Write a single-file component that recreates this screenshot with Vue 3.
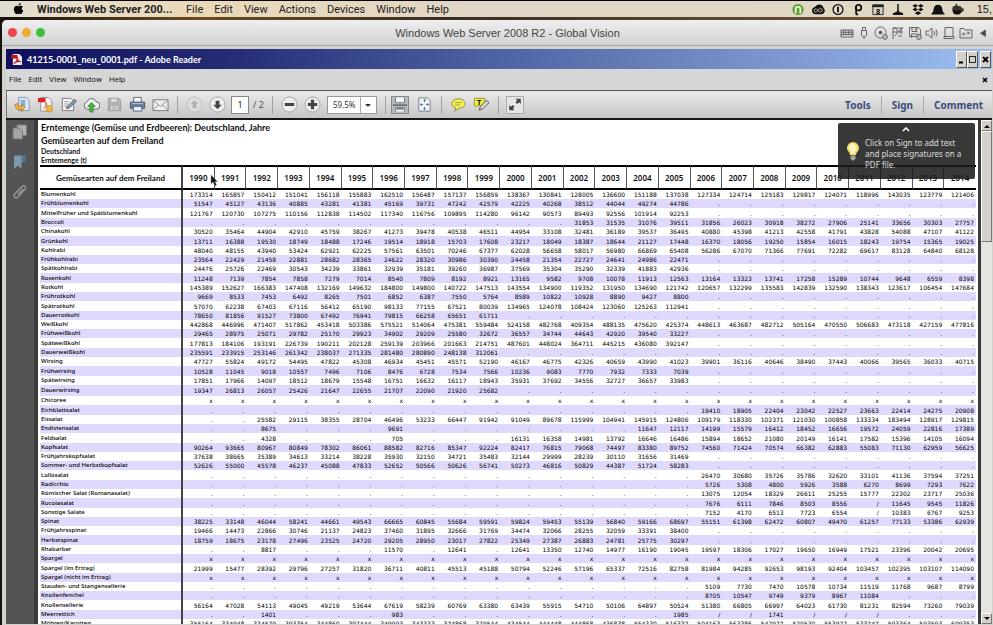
<script setup>
import { ref } from 'vue'

const macMenus = ['File', 'Edit', 'View', 'Actions', 'Devices', 'Window', 'Help']
const readerMenus = ['File', 'Edit', 'View', 'Window', 'Help']
const page = ref('1')
const zoom = ref('59.5%')
const years = Array.from({ length: 25 }, (_, i) => 1990 + i)

// "token*n" repeats a token n times
const expand = (line) =>
  line.split(' ').flatMap((t) => {
    const [value, count] = t.split('*')
    return Array(Number(count || 1)).fill(value)
  })

const rows = [
  ['Blumenkohl', '173314 165857 150412 151041 156118 155883 162510 156487 157137 156859 138367 130841 128005 136600 151188 137038 127334 124714 125183 129817 124071 118996 143035 123779 121406'],
  ['Frühblumenkohl', '51547 45127 43136 40885 43281 41381 45169 39731 47242 42579 42225 40268 38512 44044 49274 44786 .*9'],
  ['Mittelfrüher und Spätblumenkohl', '121767 120730 107275 110156 112838 114502 117340 116756 109895 114280 96142 90573 89493 92556 101914 92253 .*9'],
  ['Broccoli', '.*12 31853 31535 31076 39511 31856 26023 30918 38272 27906 25141 33656 30303 27757'],
  ['Chinakohl', '30520 35464 44904 42910 45759 38267 41273 39478 40538 46511 44954 33108 32481 36189 39537 36495 40880 45398 41213 42558 41791 43828 54088 47107 41122'],
  ['Grünkohl', '13711 16388 19530 18749 18488 17246 19514 18918 15703 17608 23217 18049 18387 18644 21127 17448 16370 18056 19250 15854 16015 18243 19754 15365 19025'],
  ['Kohlrabi', '48040 48155 43940 53424 62921 62225 57561 63501 70246 67377 62028 56658 58017 56980 66869 65408 56286 67070 71366 77691 72282 69617 83128 64840 68128'],
  ['Frühkohlrabi', '23564 22429 21458 22881 28682 28365 24622 28320 30986 30390 24458 21354 22727 24641 24986 22471 .*9'],
  ['Spätkohlrabi', '24476 25726 22469 30543 34239 33861 32939 35181 39260 36987 37569 35304 35290 32339 41883 42936 .*9'],
  ['Rosenkohl', '11248 7139 7854 7858 7279 7014 8540 7809 8192 8921 13165 9582 9708 10078 11913 12563 13164 13323 13741 17258 15289 10744 9648 6559 8398'],
  ['Rotkohl', '145389 152627 166383 147408 132169 149632 184800 149800 140722 147513 143554 134900 119352 131950 134690 121742 120657 132299 135583 142839 132590 138343 123617 106454 147684'],
  ['Frührotkohl', '9669 8533 7453 6492 8265 7501 6852 6387 7550 5764 8589 10822 10928 8890 9427 8800 .*9'],
  ['Spätrotkohl', '57070 62238 67403 67116 56412 65190 98133 77155 67521 80039 134965 124078 108424 123060 125263 112941 .*9'],
  ['Dauerrotkohl', '78650 81856 91527 73800 67492 76941 79815 66258 65651 61711 .*15'],
  ['Weißkohl', '442868 446996 471407 517862 453418 503386 575521 514064 475381 559484 524158 482768 409354 488135 475620 425374 448613 463687 482712 505164 470550 506683 473118 427159 477816'],
  ['Frühweißkohl', '29465 28975 25071 29782 25170 29923 34902 29209 25580 32672 36557 34744 44643 42920 39540 33227 .*9'],
  ['Spätweißkohl', '177813 184106 193191 226739 190211 202128 259139 203966 201663 214751 487601 448024 364711 445215 436080 392147 .*9'],
  ['Dauerweißkohl', '235591 233915 253146 261342 238037 271335 281480 280890 248138 312061 .*15'],
  ['Wirsing', '47727 55824 49172 54495 47822 45308 46934 45451 45571 52190 46167 46775 42326 40659 43990 41023 39901 36116 40646 38490 37443 40066 39565 36033 40715'],
  ['Frühwirsing', '10528 11045 9018 10557 7496 7106 8476 6728 7534 7566 10236 9083 7770 7932 7333 7039 .*9'],
  ['Spätwirsing', '17851 17966 14097 18512 18679 15548 16751 16632 16117 18943 35931 37692 34556 32727 36657 33983 .*9'],
  ['Dauerwirsing', '19347 26813 26057 25426 21647 22655 21707 22090 21920 25682 .*15', true],
  ['Chicoree', 'x*25'],
  ['Eichblattsalat', '.*16 19410 18905 22404 23042 22527 23663 22414 24275 20908'],
  ['Eissalat', '.*2 25582 29115 38355 28704 46496 53233 66447 91942 91049 89678 115999 104941 145915 124806 109179 118330 102371 121030 100858 133334 183494 128917 129815'],
  ['Endiviensalat', '.*2 8675 .*3 9691 .*7 11647 12117 14199 15579 16412 18452 16656 19572 24059 22816 17389'],
  ['Feldsalat', '.*2 4328 .*3 705 .*3 16131 16358 14981 13792 16646 16486 15894 18652 21080 20149 16141 17582 15396 14105 16094'],
  ['Kopfsalat', '90264 93665 80967 80849 78302 86061 88582 82716 85347 92224 82417 76815 79068 74497 83380 89752 74560 71424 70574 66382 62883 55083 71130 62959 56625'],
  ['Frühjahrskopfsalat', '37638 38665 35389 34613 33214 38228 35930 32150 34721 35483 32144 29999 28239 30110 31656 31469 .*9'],
  ['Sommer- und Herbstkopfsalat', '52626 55000 45578 46237 45088 47833 52652 50566 50626 56741 50273 46816 50829 44387 51724 58283 .*9'],
  ['Lollosalat', '.*16 26470 30680 35726 35786 32620 33101 41136 37594 37251'],
  ['Radicchio', '.*16 5726 5308 4800 5926 3588 6270 8699 7293 7622'],
  ['Römischer Salat (Romanasalat)', '.*16 13075 12054 18329 26611 25255 15777 22302 23717 25036'],
  ['Rucolasalat', '.*16 7676 6111 7846 8503 8556 / 11645 9545 11826'],
  ['Sonstige Salate', '.*16 7152 4170 6513 7723 6554 / 10383 6767 9253'],
  ['Spinat', '38225 33148 46044 58241 44661 49543 66665 60845 55684 59591 59824 59453 55139 56840 59166 68697 55151 61398 62472 60807 49470 61257 77133 53386 62939'],
  ['Frühjahrsspinat', '19466 14473 22866 30746 21137 24823 37460 31895 32666 31769 34474 32066 28255 32059 33391 38400 .*9'],
  ['Herbstspinat', '18759 18675 23178 27496 23525 24720 29205 28950 23017 27822 25349 27387 26883 24781 25775 30297 .*9'],
  ['Rhabarber', '.*2 8817 .*3 11570 . 12641 . 12641 13350 12740 14977 16190 19045 19597 18306 17027 19650 16949 17521 23396 20042 20695'],
  ['Spargel', 'x*25'],
  ['Spargel (im Ertrag)', '21999 15477 28392 29796 27257 31820 36711 40811 45513 45188 50794 52246 57196 65337 72516 82758 81984 94285 92653 98193 92404 103457 102395 103107 114090'],
  ['Spargel (nicht im Ertrag)', 'x*25'],
  ['Stauden- und Stangensellerie', '.*16 5109 7730 7470 10578 10734 11519 11768 9687 8799'],
  ['Knollenfenchel', '.*16 8705 10547 9749 9379 8967 11084 .*3'],
  ['Knollensellerie', '56164 47028 54113 49045 49219 53644 67619 58239 60769 63380 63439 55915 54710 50106 64897 50524 51380 66805 66997 64023 61730 81231 82594 73260 79039'],
  ['Meerrettich', '.*2 1401 .*3 983 .*8 1985 /*2 1741 /*3 .*3'],
  ['Möhren/Karotten', '355164 334948 334579 393354 344860 397444 349993 343333 374868 379544 434544 444448 444868 436838 554330 516337 504163 563386 547977 570530 553977 533747 593364 593593 609353'],
].map(([label, line, groupEnd]) => ({ label, groupEnd, values: expand(line) }))
</script>

<template>
  <div class="desktop">
    <header class="macbar">
      <svg class="apple" viewBox="0 0 12 14" aria-hidden="true"><path d="M8.7 0C8.8 1.6 7.6 3 6 3 5.900 1.500 7.200.200 8.700 0ZM6.100 3.700c.700 0 1.300-.600 2.600-.600 1 0 1.900.500 2.400 1.200-2 1.300-1.600 4 .5 4.800-.500 1.500-1.700 3.800-3 3.800-.900 0-1.200-.500-2.300-.500s-1.400.500-2.300.500C2.400 12.900.6 10 .6 7.300.600 4.600 2.200 3.200 3.800 3.200c1 0 1.700.500 2.300.500Z" /></svg>
      <strong class="appname">Windows Web Server 200...</strong>
      <nav class="macmenu"><a v-for="m in macMenus" :key="m" href="#">{{ m }}</a></nav>
      <div class="status">
        <svg viewBox="0 0 14 14"><circle cx="7" cy="7" r="6" fill="#5fa52c" /><path d="M4.500 11V6.500a2.500 2.500 0 0 1 5 0V11" fill="none" stroke="#fff" stroke-width="1.800" /></svg>
        <svg viewBox="0 0 14 14"><path d="M4 12a3.900 3.900 0 0 1-.3-7.700A5 5 0 0 1 13 5.500a3.700 3.700 0 0 1-2 6.500Z" fill="#111" /><path d="M8.500 9.500 5.500 6.800a1.700 1.700 0 1 0 0 2.600l2.800-3a1.900 1.900 0 1 1 .4 3" fill="none" stroke="#ded6c4" stroke-width=".9" /></svg>
        <svg viewBox="0 0 14 14"><circle cx="7" cy="7" r="5.300" fill="none" stroke="#111" stroke-width="1.400" /><path d="M7 4v6" stroke="#111" stroke-width="2" /></svg>
        <svg viewBox="0 0 14 14"><circle cx="7.500" cy="5" r="3" fill="none" stroke="#111" stroke-width="1.900" /><path d="M5 4v7q0 2 2 1" fill="none" stroke="#111" stroke-width="1.900" /></svg>
        <svg viewBox="0 0 14 14"><path d="M1.500 2.500h11v10h-11z" fill="#ded6c4" stroke="#222" /><path d="M1 1.500h12v3H1z" fill="#222" /><text x="7" y="11.500" text-anchor="middle" font-size="8" font-weight="700" font-family="Liberation Sans, sans-serif">8</text></svg>
        <svg viewBox="0 0 14 14"><path d="M6.200 1h1.600v7l.7 1.500 4 1.500v2h-11v-2l4-1.500.7-1.500Z" fill="#111" /></svg>
        <svg viewBox="0 0 14 14"><path d="m4 1 3 2-3 2-3-2Zm6 0 3 2-3 2-3-2ZM4 5l3 2-3 2-3-2Zm6 0 3 2-3 2-3-2ZM7 8.500 10.500 11 7 13 3.500 11Z" fill="#111" /></svg>
        <svg viewBox="0 0 14 14"><path d="M1.500 10C2.500 9 1.500 2 7 2s4.500 7 5.500 8l1.500 1v1.500H0V11Z" fill="#111" /></svg>
        <svg viewBox="0 0 14 14"><path d="M1 6h10c0 6-2 6.500-5 6.500S1 12 1 6Z" fill="#111" /><ellipse cx="6" cy="5.500" rx="5" ry="2.500" fill="#3a332b" /><path d="M10.500 6.500h2q.5 2.500-3 3M5 4q-1-1.500 1-3" fill="none" stroke="#111" stroke-width="1.300" /></svg>
        <time>15,</time>
      </div>
    </header>

    <div class="vm">
      <div class="vmtitle">
        <div class="lights"><button class="red" aria-label="Close"></button><button class="amber" aria-label="Minimize"></button><button class="green" aria-label="Zoom"></button></div>
        <h1>Windows Web Server 2008 R2 - Global Vision</h1>
        <div class="devices">
          <svg viewBox="0 0 14 14"><path d="M1 4h12v7H1zM1 6.300h12M1 8.600h12M3.500 4v5M6 4v5M8.500 4v5M11 4v5" /></svg>
          <svg viewBox="0 0 14 14"><path d="M5.500 1.500h3v3h-3zM4.500 4.500h5v5l-1 1h-3l-1-1zM7 10.500V13" /></svg>
          <svg viewBox="0 0 14 14"><circle cx="6.500" cy="6.500" r="5.500" /><circle cx="6.500" cy="6.500" r="1.500" fill="#555" /><circle cx="11" cy="11" r="2.400" fill="#bbb" /></svg>
          <svg viewBox="0 0 14 14"><path d="M2 13V2h3l2 4h5M2 6h5l5-4M4 10l3-4M10 8V2M2 2h10M7 10h4" /></svg>
          <svg viewBox="0 0 14 14"><path d="M1.500 1.500h9l2 2v7h-11zM4 1.500v4h5v-4M3.500 12V8H10v3M7.500 2.500v2" /><circle cx="11" cy="11" r="2.400" fill="#bbb" /></svg>
          <svg viewBox="0 0 14 14"><path d="M1 5h2.500L7 2v10L3.500 9H1zM9 5q1.500 2 0 4M11 3.500q2.500 3.500 0 7" /></svg>
          <svg viewBox="0 0 14 14"><path d="M3 1.500h8v9H3zM2 10.500h10v2H2z" /></svg>
          <svg viewBox="0 0 14 14"><path d="M1 2.500h4l1 1.500h7v8H1zM3.500 8h3m-1.500-1.500L3.500 8 5 9.500M10.500 7h-3M9 5.500 10.500 7 9 8.500" /></svg>
          <svg viewBox="0 0 14 14"><path d="M9.500 4v6.500L4.500 7.200z" fill="#444" /></svg>
        </div>
      </div>

      <main class="reader">
        <div class="bluebar">
          <svg class="pdf" viewBox="0 0 12 12"><path d="M2 0h7l3 3v9H2z" fill="#f3e9e9" /><path d="M0 1h7v4H0z" fill="#b3141c" /><path d="M3 10.500C7 8 7 5 6.500 3 7 7 9 8.500 11 8.500 8 7.500 5 8.500 3 10.500Z" fill="none" stroke="#b3141c" stroke-width="1.200" /></svg>
          <h2>41215-0001_neu_0001.pdf - Adobe Reader</h2>
          <div class="winbtns">
            <button aria-label="Minimize"><svg viewBox="0 0 9 13"><path d="M2 9.500h4" stroke="#000" stroke-width="2" /></svg></button>
            <button aria-label="Maximize"><svg viewBox="0 0 9 13"><path d="M1.500 3.500h6v6h-6zM1 3.500h7" fill="none" stroke="#222" /></svg></button>
            <button class="close" aria-label="Close"><svg viewBox="0 0 9 13"><path d="m2 4 5 5M7 4 2 9" stroke="#000" stroke-width="1.800" /></svg></button>
          </div>
        </div>
        <nav class="menurow">
          <a v-for="m in readerMenus" :key="m" href="#">{{ m }}</a>
          <button class="docclose" aria-label="Close document"><svg viewBox="0 0 6 6"><path d="m1 1 4 4M5 1 1 5" stroke="#000" stroke-width="1.600" /></svg></button>
        </nav>

        <div class="toolbar">
          <button class="tool" aria-label="Open"><svg viewBox="0 0 18 18"><path d="M5 1.500h8l3 3v11H5z" fill="#dfe8f5" stroke="#7f95b5" /><path d="M7 4h5v7H7z" fill="#8fb0dc" /><path d="M1 9c0 5 3 6 7 5v2.500l4-4.500-4-3.500V11c-3 .5-4 0-4-3Z" fill="#f0b23c" stroke="#a8701c" stroke-width=".7" /></svg></button>
          <button class="tool" aria-label="Create PDF"><svg viewBox="0 0 18 18"><path d="M4 1.500h8l3.500 3.500v11H4z" fill="#f7f3f1" stroke="#9a8f8c" /><path d="M1 2h8v4.500H1z" fill="#d8232c" /><path d="M7 13c3-2 2.500-4 2.500-6 .5 3 2 4 4 4.500" fill="none" stroke="#c33" /><circle cx="13" cy="13.500" r="3.500" fill="#f5b544" stroke="#c98a20" stroke-width=".7" /></svg></button>
          <button class="tool" aria-label="Sign document"><svg viewBox="0 0 18 18"><path d="M2.500 2.500h9l3 3v10h-12z" fill="#f4f4f4" stroke="#777" /><path d="M4.500 6h5M4.500 8.500h4M4.500 11h3" stroke="#999" /><path d="m7 13.500 1-3 7.500-7 2 2-7.500 7z" fill="#8b98a5" stroke="#4f5a66" stroke-width=".9" /></svg></button>
          <button class="tool" aria-label="Upload"><svg viewBox="0 0 18 18"><path d="M4.500 14a4 4 0 0 1-.3-7.800 5 5 0 0 1 9.500-.2 4 4 0 0 1 .3 8Z" fill="#eee" stroke="#666" /><path d="m9 7 4 4h-2.300v6H7.300v-6H5Z" fill="#4fb848" stroke="#2c8429" stroke-width=".8" /></svg></button>
          <button class="tool" aria-label="Save"><svg viewBox="0 0 18 18"><path d="M2.500 2.500h11l2 2v11h-13z" fill="#b5b5b5" stroke="#9a9a9a" /><path d="M5 2.500h7v4.500H5zM4.500 10h9v5.500h-9z" fill="#dcdcdc" stroke="#a2a2a2" stroke-width=".8" /><path d="M6 12h6M6 14h6" stroke="#aaa" /></svg></button>
          <button class="tool" aria-label="Print"><svg viewBox="0 0 18 18"><path d="M5 1.500h8v6H5z" fill="#fff" stroke="#666" /><path d="M1.500 6.500h15v6.500h-15z" fill="#68809e" stroke="#45566c" /><path d="M3 8h12" stroke="#b4c6dc" /><path d="M4.500 11h9v5h-9z" fill="#e7f0fb" stroke="#55657b" /></svg></button>
          <button class="tool" aria-label="Email"><svg viewBox="0 0 18 18"><path d="M1 4h16v11.500H1z" fill="#eee" stroke="#7a7a7a" /><path d="m1 4.500 8 6.500 8-6.500M1 15l6-5.500M17 15l-6-5.500" fill="none" stroke="#8d8d8d" /></svg></button>
          <i class="sep"></i>
          <button class="tool" aria-label="Previous page"><svg viewBox="0 0 18 18"><circle cx="9" cy="9" r="8" fill="#dedede" stroke="#bcbcbc" /><path d="m9 4.500 4 4h-2V13H7V8.500H5Z" fill="#b0b0b0" /></svg></button>
          <button class="tool" aria-label="Next page"><svg viewBox="0 0 18 18"><circle cx="9" cy="9" r="8" fill="#eee" stroke="#a5a5a5" /><path d="m9 14 4.500-4.800H11V5H7v4.200H4.500Z" fill="#444" /></svg></button>
          <input v-model="page" class="page" aria-label="Page number">
          <span class="pages">/ 2</span>
          <i class="sep"></i>
          <button class="tool" aria-label="Zoom out"><svg viewBox="0 0 18 18"><circle cx="9" cy="9" r="8" fill="#eee" stroke="#a5a5a5" /><path d="M4 9h10" stroke="#444" stroke-width="3.400" /></svg></button>
          <button class="tool" aria-label="Zoom in"><svg viewBox="0 0 18 18"><circle cx="9" cy="9" r="8" fill="#eee" stroke="#a5a5a5" /><path d="M4 9h10M9 4v10" stroke="#444" stroke-width="3.400" /></svg></button>
          <label class="combo"><select v-model="zoom" aria-label="Zoom level"><option>59.5%</option><option>100%</option></select></label>
          <i class="sep"></i>
          <button class="tool pressed" aria-label="Fit width"><svg viewBox="0 0 18 18"><path d="M4 1v6h10V1M4 17v-4.500h10V17" fill="#f5f7fb" stroke="#6b7380" /><path d="M1 9.700h16" stroke="#555" stroke-width="1.200" /><path d="M5 14h8" stroke="#7b8798" stroke-width="2" /></svg></button>
          <button class="tool" aria-label="Fit page"><svg viewBox="0 0 18 18"><path d="M3 2h9l3 3v11H3z" fill="#eef2fa" stroke="#77808e" /><path d="M9 3.500v3M9 11.500v3M4.500 9h3M10.500 9h3M8 5l1-1.500L10 5M8 13l1 1.500 1-1.500M6 8 4.500 9 6 10M12 8l1.500 1-1.500 1" fill="none" stroke="#5c7094" /></svg></button>
          <i class="sep"></i>
          <button class="tool" aria-label="Comment note"><svg viewBox="0 0 18 18"><path d="M9 3c4 0 7 2 7 5s-3 5-6.500 5L5 16l1-3.500C3.500 11.800 2 10 2 8c0-3 3-5 7-5Z" fill="#f3ee58" stroke="#8d8a35" /><path d="M5.500 7h7M5.500 9.500h5" stroke="#a09c3a" /></svg></button>
          <button class="tool" aria-label="Highlight text"><svg viewBox="0 0 18 18"><path d="M1.500 2.500h11v8h-11z" fill="#f3ee3c" stroke="#99953a" /><text x="6.500" y="9.300" text-anchor="middle" font-size="8" font-weight="700" font-family="Liberation Sans, sans-serif">T</text><path d="m6.500 15 1.500-4 6-6.500 3 2.500-6.500 6.500z" fill="#d8d8c8" stroke="#555" /></svg></button>
          <i class="sep"></i>
          <button class="tool framed" aria-label="Read mode"><svg viewBox="0 0 18 18"><path d="M15.500 2.500v6l-2-2-2 2-2-2 2-2-2-2Z" fill="#444" /><path d="M2.500 15.500v-6l2 2 2-2 2 2-2 2 2 2Z" fill="#444" /></svg></button>
          <div class="panels"><button>Tools</button><button>Sign</button><button>Comment</button></div>
        </div>

        <div class="body">
          <aside class="rail">
            <button aria-label="Page thumbnails"><svg viewBox="0 0 16 16"><path d="M5 1h9.500v10.500H5z" fill="#b2b2b2" stroke="#7d7d7d" /><path d="M1 4h6.500l3 3v8H1z" fill="#a6a6a6" stroke="#777" /></svg></button>
            <button aria-label="Bookmarks"><svg viewBox="0 0 16 16"><path d="M7 1h7v8H7z" fill="#5d7488" stroke="#46596a" /><path d="M2 1.500h7.500V15l-3.700-3.500L2 15z" fill="#7e98ac" /></svg></button>
            <button aria-label="Attachments"><svg viewBox="0 0 16 16"><path d="m4 9 6-6.500c2-2 5 .5 3 2.700L6 13c-2.300 2.300-5.500-.500-3.300-3L9.500 3M6 10.500 11 5" fill="none" stroke="#999" stroke-width="1.300" /></svg></button>
          </aside>
          <article class="paper">
            <div class="heads">
              <h3>Erntemenge (Gemüse und Erdbeeren): Deutschland, Jahre</h3>
              <h3>Gemüsearten auf dem Freiland</h3>
              <p>Deutschland</p>
              <p>Erntemenge (t)</p>
            </div>
            <table>
              <thead>
                <tr><th class="name" scope="col">Gemüsearten auf dem Freiland</th><th v-for="y in years" :key="y" scope="col">{{ y }}</th></tr>
              </thead>
              <tbody>
                <tr v-for="r in rows" :key="r.label" :class="{ last: r.groupEnd }">
                  <th class="name" scope="row">{{ r.label }}</th>
                  <td v-for="(v, i) in r.values" :key="i">{{ v }}</td>
                </tr>
              </tbody>
            </table>
            <div class="hint" role="status">
              <svg class="chev" viewBox="0 0 8 5"><path d="m1 4 3-3 3 3" fill="none" stroke="#fff" stroke-width="1.600" /></svg>
              <svg class="bulb" viewBox="0 0 14 20"><path d="M7 1a6 6 0 0 1 6 6c0 3-2.700 4-3 7H4c-.3-3-3-4-3-7a6 6 0 0 1 6-6Z" fill="#f4dc6a" /><path d="M6 3a4 4 0 0 1 4.500 4c0 2-2 3-2 5.500h-3C5.500 10 3 9 3 6.500A3.500 3.500 0 0 1 6 3Z" fill="#fff6c4" /><path d="M4.500 14.500h5v3l-1.500 2H6l-1.500-2z" fill="#a5a5a5" /></svg>
              <span>Click on Sign to add text and place signatures on a PDF file.</span>
            </div>
            <svg class="cursor" viewBox="0 0 8 13"><path d="M1 1v9l2-2 2 4 1.500-1L5 7.500h2.500Z" fill="#111" stroke="#888" stroke-width=".5" /></svg>
          </article>
          <div class="scroll">
            <button aria-label="Scroll up"><svg viewBox="0 0 6 4"><path d="m0 4 3-3 3 3z" /></svg></button>
            <div class="thumb"></div>
            <button class="down" aria-label="Scroll down"><svg viewBox="0 0 6 4"><path d="m0 0 3 3 3-3z" /></svg></button>
          </div>
        </div>
      </main>
    </div>
  </div>
</template>

<style>
body { margin: 0; overflow: hidden; background: #2a2118; }
</style>

<style scoped>
* { box-sizing: border-box; }
button { padding: 0; margin: 0; border: 0; background: none; font: inherit; color: inherit; display: flex; align-items: center; justify-content: center; flex: none; }
a { color: inherit; text-decoration: none; }
h1, h2, h3, p { margin: 0; font-weight: 400; }
.desktop { height: 100vh; display: flex; flex-direction: column; background: linear-gradient(90deg, #17110c, #6a4b1e 20%, #3a2d22 45%, #6d5536 90%, #4c3f2e); overflow: hidden; }

.macbar { flex: none; height: 17px; border-top: 1px solid #000; background: linear-gradient(90deg, #e3ddd0, #ead9b8 20%, #e2d7c6 45%, #dfd6c3); display: flex; align-items: center; padding: 0 1px 0 13px; font: 11px "Liberation Sans", Arial, sans-serif; color: #222; white-space: nowrap; }
.apple { width: 11px; height: 12px; margin-right: 13px; }
.appname { width: 136px; margin-right: 13px; font-family: Roboto, sans-serif; }
.macmenu { display: flex; gap: 11px; font-family: Roboto, sans-serif; color: #222; }
.status { margin-left: auto; display: flex; align-items: center; gap: 6px; }
.status svg { width: 14px; height: 13px; }
.status time { margin-left: 6px; }

.vm { flex: 1; min-height: 0; margin: 3px 0 0 2px; border-radius: 5px 0 0 0; background: #d0d0cd; display: flex; flex-direction: column; overflow: hidden; }
.vmtitle { flex: none; height: 26px; border-bottom: 1px solid #a5a5a5; background: linear-gradient(#efefef, #d2d2d2); display: grid; grid-template-columns: 1fr auto 1fr; align-items: center; padding: 0 3px 0 6px; }
.lights { display: flex; gap: 5px; }
.lights button { width: 9px; height: 9px; border-radius: 50%; }
.red { background: #ee4450; }
.amber { background: #f0ab30; }
.green { background: #3cbf3a; }
.vmtitle h1 { padding-left: 17px; font: 11px "Liberation Sans", Arial, sans-serif; color: #444; }
.devices { display: flex; justify-content: flex-end; gap: 3px; }
.devices svg { width: 14px; height: 14px; fill: none; stroke: #666; stroke-width: 1; }

.reader { flex: 1; min-height: 0; margin: 3px 1px 1px 4px; display: flex; flex-direction: column; background: #d6d6d6; font-family: "Noto Sans", sans-serif; }
.bluebar { flex: none; height: 20px; display: flex; align-items: center; padding: 0 1px 0 5px; background: linear-gradient(90deg, #10105c, #242c74 22%, #4c5f9f 48%, #7f9ad2 80%, #9dc0f2); color: #fff; }
.pdf { width: 11px; height: 11px; margin-right: 5px; }
.bluebar h2 { font-family: Lato, sans-serif; font-size: 9px; font-weight: 700; }
.winbtns { display: flex; margin-left: auto; }
.winbtns button { width: 11px; height: 17px; background: #d5d1c8; border: 1px solid; border-color: #fff #555 #555 #fff; }
.winbtns svg { width: 9px; height: 13px; }
.winbtns .close { margin-left: 2px; }
.menurow { flex: none; height: 22px; display: flex; align-items: center; gap: 7px; padding: 0 4px 0 3px; border-bottom: 1px solid #555; font-family: Roboto, sans-serif; font-size: 8px; color: #222; }
.docclose { margin-left: auto; }
.docclose svg { width: 6px; height: 6px; }

.toolbar { flex: none; height: 27px; display: flex; align-items: center; padding: 0 4px; border-left: 1px solid #777; background: linear-gradient(#eaeaea, #c6c6c6); color: #555; font-size: 9px; }
.tool { width: 23px; height: 18px; }
.tool svg { width: 17px; height: 17px; }
.sep { flex: none; width: 1px; height: 18px; margin: 0 5px; background: #a2a2a2; }
.page { width: 18px; height: 18px; margin: 0 4px 0 2px; padding: 0; border: 1px solid #888; background: #fff; font: 9px "Noto Sans", sans-serif; text-align: center; color: #222; }
.pages { width: 14px; white-space: nowrap; }
.combo { position: relative; display: block; width: 50px; height: 18px; margin: 0 3px; border: 1px solid #999; background: #fff; }
.combo select { appearance: none; width: 100%; height: 16px; padding: 0 0 0 5px; border: 0; background: transparent; font: 8px "Noto Sans", sans-serif; color: #333; }
.combo::after { content: ""; position: absolute; right: 5px; top: 7px; border: 3px solid transparent; border-top-color: #333; border-bottom: 0; }
.combo::before { content: ""; position: absolute; right: 15px; top: 0; bottom: 0; border-left: 1px solid #aaa; }
.pressed, .framed { width: 18px; margin: 0 4px 0 0; border: 1px solid #888; background: #b9b9b9; }
.framed { margin-left: 2px; border-color: #aaa; background: #e6e6e6; }
.panels { margin-left: auto; display: flex; }
.panels button { height: 18px; padding: 0 10px; border-left: 1px solid #aaa; font: 700 10px "Noto Sans", sans-serif; color: #3c4d7c; }
.panels button:first-child { border: 0; }
.panels button:last-child { padding-right: 5px; }

.body { flex: 1; min-height: 0; display: flex; border-top: 2px solid #151515; background: #3b3b3b; }
.rail { flex: none; width: 28px; padding-top: 4px; background: #545454; display: flex; flex-direction: column; align-items: center; gap: 14px; }
.rail svg { width: 16px; height: 16px; }
.paper { position: relative; flex: 1; min-width: 0; overflow: hidden; margin: 0 3px 0 4px; padding: 1px 2px 0 2px; background: #fff; color: #111; }
.heads { padding-left: 1px; font-family: Lato, "Noto Sans", sans-serif; white-space: nowrap; }
.heads h3 { font-size: 9px; line-height: 13px; font-weight: 700; }
.heads p { font-size: 7px; line-height: 9px; font-weight: 700; }
table { width: 100%; table-layout: fixed; border-collapse: separate; border-spacing: 0; }
th, td { padding: 0; overflow: hidden; white-space: nowrap; line-height: 9px; }
thead th { height: 25px; border-top: 2px solid #000; border-bottom: 2px solid #000; border-right: 1px solid #555; font: 600 8px "Noto Sans", sans-serif; }
thead th:last-child { border-right: 0; }
thead .name { width: 143px; border-right: 2px solid #444; font: 700 8px Lato, sans-serif; }
tbody tr { height: 9px; }
tbody tr:nth-child(7n + 3), tbody tr:nth-child(7n + 6) { height: 10px; }
tbody tr.last { height: 11px; }
tbody tr:nth-child(even) { background: #dfdafd; }
tbody th { padding-left: 1px; border-right: 2px solid #444; font: 500 6px "Noto Sans", sans-serif; line-height: 9px; text-align: left; color: #000; }
td { padding-right: 2px; font: 6px "DejaVu Sans", sans-serif; line-height: 9px; text-align: right; color: #000; }

.hint { position: absolute; top: 3px; right: 3px; width: 137px; height: 56px; padding: 14px 6px 0 8px; border-radius: 2px; background: rgba(28, 28, 28, .88); color: #ddd; display: flex; gap: 5px; font-size: 8px; line-height: 11px; }
.chev { position: absolute; top: 4px; left: 64px; width: 8px; height: 5px; }
.bulb { flex: none; width: 14px; height: 20px; margin-top: 4px; }
.cursor { position: absolute; left: 172px; top: 54px; width: 8px; height: 13px; }

.scroll { flex: none; width: 11px; background: #e6e4df; display: flex; flex-direction: column; }
.scroll button { width: 11px; height: 11px; background: #d5d1c8; border: 1px solid; border-color: #fff #777 #777 #fff; }
.scroll button svg { width: 6px; height: 4px; }
.thumb { height: 22%; background: #d5d1c8; border: 1px solid; border-color: #fff #777 #777 #fff; }
.scroll .down { margin-top: auto; }
</style>
